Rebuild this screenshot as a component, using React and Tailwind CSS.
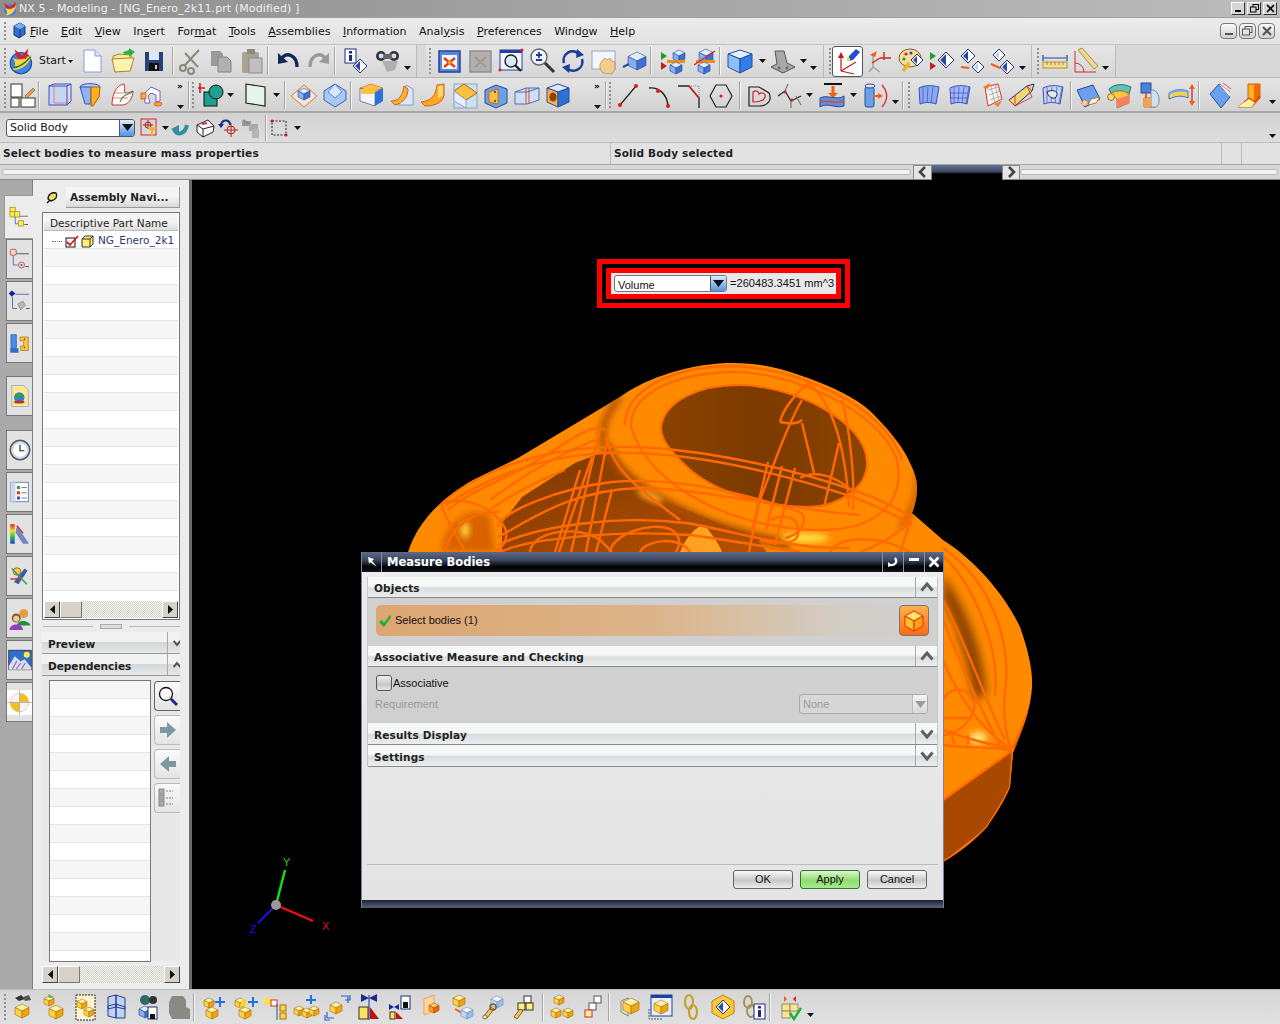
import React from 'react';

const Ic = ({ children, s = 28, vb = 28 }) => (
  <svg width={s} height={s} viewBox={`0 0 ${vb} ${vb}`} className="block shrink-0">{children}</svg>
);
const PAL = {
  y: ['#fff0b0', '#ffd24a', '#f0a410', '#a87000'],
  b: ['#e0ecff', '#86aef0', '#3f70d4', '#2a4a9a'],
  l: ['#f0f6ff', '#c4d8f4', '#9abce8', '#6a8cc0'],
  o: ['#ffd070', '#ffa020', '#f06a00', '#b04000'],
  g: ['#c8c8c8', '#a0a0a0', '#808080', '#606060'],
};
const C = ({ x = 14, y = 14, s = 8, c = 'y' }) => {
  const p = PAL[c];
  return (
    <g stroke={p[3]} strokeWidth="0.6" strokeLinejoin="round">
      <polygon fill={p[0]} points={`${x},${y - s} ${x + s},${y - s / 2} ${x},${y} ${x - s},${y - s / 2}`} />
      <polygon fill={p[1]} points={`${x - s},${y - s / 2} ${x},${y} ${x},${y + s} ${x - s},${y + s / 2}`} />
      <polygon fill={p[2]} points={`${x},${y} ${x + s},${y - s / 2} ${x + s},${y + s / 2} ${x},${y + s}`} />
    </g>
  );
};
const Dia = ({ x, y, s = 6, c = '#2a4aa8' }) => (
  <g>
    <polygon points={`${x},${y - s} ${x + s},${y} ${x},${y + s} ${x - s},${y}`} fill="#fff" stroke="#20307a" />
    <polygon points={`${x},${y - s + 2} ${x},${y + s - 2} ${x - s + 2},${y}`} fill={c} />
  </g>
);
const Tri2 = () => (
  <g>
    <polygon points="2,5 8,9 2,13" fill="#20a020" />
    <polygon points="2,15 8,19 2,23" fill="#c02020" />
  </g>
);
const Patch = ({ fill = '#8aa8f0', grid = 3 }) => (
  <g>
    <path d="M5,7 C11,4 18,4 25,6 L22,23 C16,21 11,21 6,23 Z" fill={fill} stroke="#3a50c0" />
    {Array.from({ length: grid }).map((_, i) => (
      <path key={i} d={`M${9 + i * 5},6 L${9 + i * 4},22`} stroke="#3a50c0" strokeWidth="0.7" fill="none" />
    ))}
  </g>
);

const I = {
  start: (
    <Ic s={30}>
      <circle cx="13" cy="16" r="10" fill="#3d86e0" stroke="#1c4c9c" />
      <path d="M5,11 C10,14 17,13 24,7 C21,17 14,23 5,22 C9,19 8,14 5,11Z" fill="#ffd24a" />
      <path d="M7,3 L14,9 L20,2 L18,12 L10,12Z" fill="#e02020" />
      <path d="M6,20 C11,20 17,16 22,10" stroke="#208020" strokeWidth="1.4" fill="none" />
    </Ic>
  ),
  newd: <Ic><path d="M6,3 H17 L23,9 V25 H6Z" fill="#fff" stroke="#8a9ae0" /><path d="M17,3 V9 H23" fill="#dde4ff" stroke="#8a9ae0" /></Ic>,
  open: <Ic><path d="M4,9 L10,7 L22,8 V22 L6,25Z" fill="#ffe88a" stroke="#a08a30" /><path d="M3,12 L20,11 L25,11 L21,24 L6,25Z" fill="#fff2b0" stroke="#a08a30" /><path d="M14,5 L20,3 V1 L26,5 L20,10 V7 L16,8Z" fill="#30b040" /></Ic>,
  save: <Ic><rect x="5" y="5" width="18" height="19" fill="#28407c" /><rect x="9" y="5" width="10" height="8" fill="#dfe8ff" /><rect x="9" y="16" width="10" height="8" fill="#111" /><rect x="15" y="18" width="2" height="4" fill="#ccc" /></Ic>,
  cut: <Ic><g stroke="#8a8a7a" strokeWidth="2" fill="none"><path d="M23,3 L9,18" /><path d="M9,6 L22,20" /><circle cx="7" cy="21" r="3" /><circle cx="15" cy="24" r="3" /></g></Ic>,
  copy: <Ic><path d="M4,4 H13 L16,7 V19 H4Z" fill="#9a9a9a" /><path d="M11,10 H20 L24,14 V25 H11Z" fill="#b0b0b0" stroke="#858585" /></Ic>,
  paste: <Ic><rect x="4" y="5" width="17" height="21" rx="2" fill="#a8a490" /><rect x="9" y="2" width="8" height="5" fill="#8a8a80" /><rect x="11" y="11" width="13" height="15" fill="#c0c0c0" stroke="#8a8a8a" /></Ic>,
  undo: <Ic><path d="M8,11 C13,5 23,8 23,20" stroke="#12285c" strokeWidth="3.4" fill="none" /><polygon points="4,6 4,17 14,15" fill="#12285c" /></Ic>,
  redo: <Ic><path d="M20,11 C15,5 5,8 5,20" stroke="#9a9a9a" strokeWidth="3.4" fill="none" /><polygon points="24,6 24,17 14,15" fill="#9a9a9a" /></Ic>,
  info: <Ic><rect x="3" y="2" width="11" height="14" fill="#fff" stroke="#1a2a80" /><rect x="7" y="4" width="3" height="2.5" fill="#1a2a80" /><rect x="7" y="8" width="3" height="6" fill="#1a2a80" /><Dia x={18} y={19} s={7} /></Ic>,
  binoc: <Ic><circle cx="8" cy="9" r="5" fill="#333" /><circle cx="21" cy="9" r="5" fill="#333" /><rect x="10" y="7" width="9" height="5" fill="#666" /><circle cx="8" cy="9" r="2.4" fill="#cfe0ff" /><circle cx="21" cy="9" r="2.4" fill="#cfe0ff" /><polygon points="9,14 25,14 22,23 14,25" fill="#b0b0b0" /></Ic>,
  fit: <Ic><rect x="4" y="4" width="21" height="21" fill="#5a86d8" stroke="#2040a0" strokeWidth="1.5" /><rect x="7" y="8" width="15" height="14" fill="#f4f6ff" /><path d="M9,11 L20,20 M20,11 L9,20" stroke="#e04010" strokeWidth="2.4" /><circle cx="14.5" cy="15.5" r="1.8" fill="#f0a010" /></Ic>,
  fitg: <Ic><rect x="4" y="4" width="21" height="21" fill="#b0b0b0" stroke="#909090" strokeWidth="1.5" /><path d="M9,10 L20,20 M20,10 L9,20" stroke="#a89880" strokeWidth="2.2" /></Ic>,
  zwin: <Ic><rect x="3" y="3" width="22" height="20" fill="#f4f6ff" stroke="#2040a0" /><rect x="3" y="3" width="22" height="3" fill="#2040a0" /><circle cx="14" cy="14" r="6" fill="#dbe8f5" stroke="#222" strokeWidth="1.4" /><path d="M18,18 L24,24" stroke="#222" strokeWidth="2.4" /><circle cx="3" cy="23" r="1.6" fill="#e02020" /><circle cx="25" cy="3" r="1.6" fill="#e02020" /></Ic>,
  zin: <Ic><circle cx="11" cy="10" r="8" fill="#f0f4ff" stroke="#666" strokeWidth="1.4" /><path d="M11,5 V11 M8,8 H14 M8,13 H14" stroke="#1c3c9c" strokeWidth="1.8" /><path d="M17,16 L26,25" stroke="#333" strokeWidth="3" /></Ic>,
  rot: <Ic><path d="M5,16 A9,9 0 0 1 20,7" stroke="#1d3e9c" strokeWidth="2.6" fill="none" /><path d="M23,12 A9,9 0 0 1 8,21" stroke="#1d3e9c" strokeWidth="2.6" fill="none" /><polygon points="18,2 25,8 17,11" fill="#1d3e9c" /><polygon points="10,26 3,20 11,17" fill="#1d3e9c" /></Ic>,
  pan: <Ic><rect x="2" y="4" width="23" height="18" fill="#f4f6ff" stroke="#9aa0c0" /><path d="M13,26 C9,22 9,17 12,14 L15,11 L17,13 L20,11 L22,14 L25,15 V22 L22,27Z" fill="#f4cc90" stroke="#a88850" strokeWidth="0.7" /></Ic>,
  persp: <Ic><C x={16} y={14} s={9} c="b" /><path d="M2,20 L8,17" stroke="#2a4a9a" strokeWidth="2" /></Ic>,
  clipa: <Ic><Tri2 /><C x={20} y={9} s={6} c="b" /><rect x="8" y="13" width="18" height="3" fill="#f09010" /><C x={17} y={21} s={6} c="b" /></Ic>,
  clipb: <Ic><C x={16} y={9} s={7} c="b" /><rect x="6" y="13" width="19" height="3" fill="#f09010" /><C x={14} y={21} s={6} c="b" /><path d="M4,18 L25,4" stroke="#e02020" strokeWidth="1.4" /></Ic>,
  bcube: <Ic><polygon points="14,3 26,7 14,12 2,7" fill="#e4f0ff" stroke="#2a4a9a" /><polygon points="2,7 14,12 14,26 2,20" fill="#8cc0f8" stroke="#2a4a9a" /><polygon points="14,12 26,7 26,20 14,26" fill="#2c80e8" stroke="#2a4a9a" /></Ic>,
  brack: <Ic><path d="M6,4 H15 L18,16 L26,20 L14,26 L2,20 L8,17Z" fill="#a8a8a8" stroke="#555" /><circle cx="10" cy="21" r="1.4" fill="#666" /><circle cx="18" cy="21" r="1.4" fill="#666" /></Ic>,
  wcs: <Ic><path d="M7,8 V24 M7,24 L22,15 M7,24 L20,27" stroke="#c01818" strokeWidth="1.2" fill="none" /><polygon points="7,5 4,11 10,11" fill="#c01818" /><polygon points="15,9 22,2 26,5 19,13 14,14" fill="#2050d0" /><rect x="13" y="11" width="3" height="3" fill="#f0d040" /></Ic>,
  wcs2: <Ic><path d="M7,6 V20 L3,25 M7,20 L14,25" stroke="#a0a0a0" strokeWidth="1.4" fill="none" /><path d="M14,11 H25 M18,5 V13 M14,11 L6,16" stroke="#c82818" strokeWidth="1.4" fill="none" /><polygon points="4,8 11,4 9,10" fill="#f06010" /></Ic>,
  paint: <Ic><ellipse cx="13" cy="11" rx="11" ry="9" fill="#f8dca0" stroke="#806020" /><circle cx="9" cy="7" r="1.6" fill="#e02020" /><circle cx="14" cy="6" r="1.6" fill="#2050d0" /><circle cx="7" cy="12" r="1.6" fill="#20a020" /><Dia x={20} y={13} s={6} /><path d="M12,16 L6,24" stroke="#f0b020" strokeWidth="3.4" /></Ic>,
  tridia: <Ic><Tri2 /><Dia x={18} y={13} s={8} /></Ic>,
  dia2: <Ic><Dia x={10} y={9} s={7} /><Dia x={20} y={20} s={6} c="#c0d0f0" /><path d="M3,20 L11,21" stroke="#f06010" strokeWidth="2" /></Ic>,
  dia3: <Ic><Dia x={11} y={8} s={6} c="#c0d0f0" /><Dia x={19} y={20} s={7} /><path d="M3,17 L12,21" stroke="#f06010" strokeWidth="2" /></Ic>,
  ruler: <Ic><path d="M2,8 V14 M26,8 V14 M3,11 H25" stroke="#2040a0" strokeWidth="1.2" /><rect x="2" y="15" width="24" height="6" fill="#f8e090" stroke="#a89040" /><path d="M6,15 V18 M10,15 V18 M14,15 V18 M18,15 V18 M22,15 V18" stroke="#a08030" /></Ic>,
  angle: <Ic><path d="M4,4 V25 H25 M4,16 A9,9 0 0 1 13,25" stroke="#d03030" fill="none" /><polygon points="7,3 11,1 27,19 23,22" fill="#f0d890" stroke="#a89040" /></Ic>,

  layout: <Ic><rect x="2" y="3" width="11" height="13" fill="#fff" stroke="#333" /><rect x="2" y="17" width="8" height="9" fill="#fff" stroke="#333" /><rect x="12" y="17" width="14" height="9" fill="#fff" stroke="#333" /><path d="M16,15 L24,7 L26,9 L18,17Z" fill="#f0a030" stroke="#555" strokeWidth="0.6" /></Ic>,
  wire: <Ic><rect x="3" y="5" width="18" height="19" fill="#c8d4f4" stroke="#3a50c0" /><path d="M3,5 L8,3 H25 V20 L21,24 M21,5 L25,3" stroke="#3a50c0" fill="none" /><path d="M8,3 V22 H25" stroke="#e06060" strokeWidth="0.7" fill="none" /></Ic>,
  sect: <Ic><ellipse cx="13" cy="6" rx="10" ry="3.4" fill="#b0ccf4" stroke="#3a50c0" /><path d="M3,6 H14 V23 H8Z" fill="#90b4f0" stroke="#3a50c0" /><path d="M14,6 H23 L22,16 L16,25 H14Z" fill="#ffb020" stroke="#a86000" /></Ic>,
  wave: <Ic><path d="M4,24 C4,14 8,4 16,3 C18,10 14,12 20,12 L25,10 C25,16 21,24 14,24Z" fill="#fff" stroke="#d03030" /><path d="M12,21 C14,14 19,14 25,11" stroke="#30a060" strokeWidth="1.2" fill="none" /><path d="M6,12 H18 M5,17 H20" stroke="#d03030" strokeWidth="0.6" /></Ic>,
  pipe: <Ic><path d="M5,13 L12,6 L21,10 V20 L17,21 V14 L12,12 L9,15 L11,22 L6,22Z" fill="#fff" stroke="#6a60d0" /><rect x="2" y="12" width="5" height="6" fill="#ffb020" stroke="#d03030" strokeWidth="0.7" /><ellipse cx="19" cy="23" rx="4" ry="2" fill="#ffb020" stroke="#d03030" strokeWidth="0.7" /></Ic>,
  sketch: <Ic><path d="M3,2 V12 M1,7 H8" stroke="#d02020" strokeWidth="1.6" /><rect x="7" y="11" width="13" height="14" fill="#20a090" stroke="#111" /><circle cx="19" cy="11" r="7" fill="#20a090" stroke="#111" /></Ic>,
  plane: <Ic><polygon points="5,3 24,6 24,25 5,22" fill="#e6f4ea" stroke="#222" strokeWidth="1.2" /></Ic>,
  wpl: <Ic><polygon points="14,4 27,15 14,26 1,15" fill="#f4e8d8" stroke="#e07030" /><C x={14} y={13} s={6} c="b" /></Ic>,
  gem: <Ic><polygon points="14,3 25,10 25,19 14,26 3,19 3,10" fill="#a8c8f8" stroke="#3a60c0" /><polygon points="14,3 21,11 14,17 7,11" fill="#d8e8ff" stroke="#3a60c0" strokeWidth="0.7" /></Ic>,
  ext: <Ic><polygon points="14,3 26,7 14,11 3,7" fill="#ffc040" stroke="#d06020" strokeWidth="0.6" /><polygon points="3,7 14,11 18,11 18,25 3,20" fill="#f4f6ff" stroke="#345" strokeWidth="0.6" /><polygon points="18,11 26,7 26,20 18,25" fill="#2c70d8" /><rect x="4" y="8" width="14" height="5" fill="#ffc040" /></Ic>,
  curv1: <Ic><path d="M4,21 C13,20 17,14 18,4 L25,8 V24 H10Z" fill="#dce8fa" stroke="#8aa0c8" /><path d="M3,20 C11,20 15,14 16,5 L20,8 C20,16 15,22 7,24Z" fill="#ffb030" stroke="#d06020" /></Ic>,
  curv2: <Ic><path d="M2,21 C13,20 17,14 18,4 L25,3 V14 C24,21 17,25 6,25Z" fill="#ffa820" stroke="#d06020" /><path d="M19,5 L24,4 V14 L19,18Z" fill="#ffd870" /></Ic>,
  chamf: <Ic><rect x="4" y="3" width="23" height="24" fill="#cce0f4" stroke="#8aa8c8" /><polygon points="4,10 14,3 27,12 16,19" fill="#ffc040" stroke="#b06010" /><polygon points="4,10 16,19 16,27 4,20" fill="#e8f0ff" stroke="#8aa8c8" /></Ic>,
  shell: <Ic><polygon points="3,9 14,4 25,8 25,22 14,27 3,22" fill="#6aa0e8" stroke="#2a4a9a" /><path d="M7,11 L16,8 V23 L7,21Z" fill="#ffc040" stroke="#c07010" /><circle cx="13" cy="11" r="1" fill="#333" /><circle cx="13" cy="20" r="1" fill="#333" /></Ic>,
  split: <Ic><polygon points="2,11 13,7 26,7 26,19 14,23 2,23" fill="#cfe0f6" stroke="#4a70b0" /><path d="M13,7 V23 M16,7 V22" stroke="#e03030" strokeWidth="0.9" /><path d="M2,11 H14 L26,7" stroke="#4a70b0" fill="none" /></Ic>,
  hole: <Ic><polygon points="14,3 25,7 14,11 3,7" fill="#dbe8ff" stroke="#2a4a9a" /><polygon points="3,7 14,11 14,26 3,21" fill="#ffb040" stroke="#2a4a9a" /><polygon points="14,11 25,7 25,21 14,26" fill="#2c70d8" stroke="#2a4a9a" /><ellipse cx="9" cy="16" rx="3.6" ry="4.6" fill="#904000" /></Ic>,
  line: <Ic><path d="M6,24 L22,5" stroke="#222" strokeWidth="1.2" /><circle cx="6" cy="24" r="2" fill="#e01818" /><circle cx="22" cy="5" r="2" fill="#e01818" /></Ic>,
  arc: <Ic><path d="M4,7 C14,6 22,13 23,25" stroke="#222" strokeWidth="1.4" fill="none" /><circle cx="13" cy="10" r="2" fill="#e01818" /><circle cx="23" cy="25" r="2" fill="#e01818" /></Ic>,
  fillet: <Ic><path d="M2,5 H13 L23,17 V27" stroke="#222" strokeWidth="1.3" fill="none" /><path d="M13,5 H23 V17" stroke="#888" strokeDasharray="1 1" fill="none" /><path d="M13,5 L23,17" stroke="#e01818" strokeWidth="1.3" /></Ic>,
  hex: <Ic><polygon points="9,4 19,4 25,15 19,26 9,26 3,15" fill="none" stroke="#222" strokeWidth="1.2" /><circle cx="14" cy="15" r="1.6" fill="#e01818" /></Ic>,
  heart: <Ic><path d="M4,6 H14 L24,12 C27,18 24,25 14,25 H4Z" fill="none" stroke="#222" strokeWidth="1.2" /><path d="M8,11 C12,8 14,12 14,13 C16,11 21,12 20,16 C19,20 12,21 8,21Z" fill="none" stroke="#d02020" strokeWidth="1.2" /></Ic>,
  spline: <Ic><path d="M2,15 L9,10 L15,20 L25,15" stroke="#222" strokeWidth="1.2" fill="none" /><path d="M12,3 L9,10 M15,20 V27 M20,15 L25,24" stroke="#777" strokeWidth="1.2" /><circle cx="9" cy="11" r="1.6" fill="#e02020" /><circle cx="16" cy="19" r="1.6" fill="#e02020" /></Ic>,
  proj: <Ic><path d="M6,3 H24" stroke="#111" strokeWidth="2" /><path d="M15,5 V13" stroke="#f06010" strokeWidth="3" /><polygon points="10,12 20,12 15,17" fill="#f06010" /><path d="M2,17 C9,13 19,20 26,15 V25 C18,28 9,21 2,26Z" fill="#5a90e0" stroke="#2a4a9a" /><path d="M3,21 C10,18 18,24 25,20" stroke="#f04030" strokeWidth="1.6" fill="none" /></Ic>,
  offs: <Ic><rect x="5" y="6" width="9" height="20" rx="2" fill="#6aa0e8" stroke="#2a4a9a" /><ellipse cx="10" cy="5" rx="5" ry="2" fill="#d8e8ff" stroke="#2a4a9a" /><path d="M13,15 H19" stroke="#f06010" strokeWidth="2" /><polygon points="18,12 23,15 18,18" fill="#f06010" /><path d="M22,4 C28,11 28,19 22,26" stroke="#e02020" strokeWidth="1.2" fill="none" /></Ic>,
  s1: <Ic><Patch fill="#8aa8f4" /></Ic>,
  s2: <Ic><Patch fill="#a0b8f6" grid={4} /><path d="M5,12 H24 M5,17 H23" stroke="#3a50c0" strokeWidth="0.7" /></Ic>,
  s3: <Ic><path d="M9,6 L22,3 L26,18 L12,25Z" fill="#f4f4f4" stroke="#e03010" /><path d="M12,9 L22,6 M13,14 L24,10 M14,19 L25,15 M15,6 L19,22 M19,4 L23,20" stroke="#9a9a9a" strokeWidth="0.7" /><polygon points="7,6 14,2 12,8" fill="#f08020" /><polygon points="22,26 26,20 18,23" fill="#f08020" /></Ic>,
  s4: <Ic><polygon points="2,19 20,5 27,3 25,10 8,25" fill="#f0d870" stroke="#1a2a90" /><path d="M2,19 L8,25 L8,14 M20,5 L25,10 M20,5 L25,16 L8,25" stroke="#e03030" strokeWidth="0.9" fill="none" /></Ic>,
  s5: <Ic><Patch fill="#c4d4f4" grid={4} /><path d="M9,11 C14,8 20,10 19,14 C18,19 11,18 9,11Z" fill="#e0e8f8" stroke="#222" /></Ic>,
  t1: <Ic><path d="M3,9 L19,4 L26,18 L11,26Z" fill="#6aa0f0" stroke="#2a4a9a" /><path d="M17,18 L26,16 L22,22 L14,24Z" fill="#fff8e0" stroke="#a08030" /><circle cx="11" cy="22" r="3" fill="#ffd0a0" stroke="#e02020" strokeDasharray="1 1" /></Ic>,
  t2: <Ic><path d="M4,8 C10,2 20,3 26,6 L24,13 C18,9 12,9 6,12Z" fill="#60c0c0" stroke="#307070" /><path d="M6,12 C12,9 18,9 24,13 V22 L12,27 V18Z" fill="#ffc840" stroke="#c07010" /><path d="M12,18 L24,14 V22 L12,27Z" fill="#f88060" /><circle cx="6" cy="16" r="3.4" fill="#ffd870" stroke="#907030" /></Ic>,
  t3: <Ic><rect x="5" y="2" width="10" height="10" fill="#4a80e0" stroke="#2a4a9a" /><path d="M10,12 V18" stroke="#f06010" strokeWidth="2" /><path d="M8,17 H20 V26 H8Z" fill="#ffc040" stroke="#c07010" /><path d="M17,9 C24,10 25,24 20,26 H15 V9Z" fill="#cfe0f0" stroke="#8090a0" /><rect x="8" y="17" width="7" height="9" fill="#f8a050" /></Ic>,
  t4: <Ic><path d="M2,12 C8,8 15,8 21,10 V17 C15,14 8,15 2,18Z" fill="#ffd050" stroke="#3a70d0" /><path d="M2,12 C8,8 15,8 21,10 V12 C15,10 8,10 2,14Z" fill="#70b0f0" /><path d="M25,5 V23" stroke="#d03030" strokeWidth="1.4" /><polygon points="25,3 22,8 28,8" fill="#f06010" /><polygon points="25,25 22,20 28,20" fill="#f06010" /></Ic>,
  u1: <Ic><path d="M5,13 L14,3 L25,16 L16,27Z" fill="#6aa0f0" stroke="#2a4a9a" /><path d="M14,3 L25,16 L22,6Z" fill="#fff" /><path d="M15,3 L25,11 M18,2 L26,8" stroke="#e03030" strokeWidth="0.8" /></Ic>,
  u2: <Ic><path d="M2,26 L12,18 V3 H24 V17 L16,26Z" fill="#ffb020" stroke="#c06010" /><path d="M18,3 H24 V17 L18,21Z" fill="#f06a00" /><path d="M2,26 L12,18 L18,21 L16,26Z" fill="#fff2a0" /><path d="M8,21 L13,17 L19,21 L24,15" stroke="#e02020" fill="none" /></Ic>,

  filter: <Ic s={22} vb={22}><rect x="1" y="2" width="15" height="16" fill="none" stroke="#d02828" /><path d="M8,3 V12 M3,8 H13" stroke="#a02020" /><circle cx="8" cy="8" r="3" fill="none" stroke="#a02020" /><polygon points="7,10 17,10 13,14 13,19 11,19 11,14" fill="#f0b030" /></Ic>,
  back: <Ic s={22} vb={22}><path d="M4,12 C6,19 15,18 17,8" stroke="#3090a0" strokeWidth="4" fill="none" /><polygon points="1,12 9,8 9,17" fill="#3090a0" /></Ic>,
  cubeo: <Ic s={22} vb={22}><polygon points="3,8 14,3 20,9 19,15 9,20 3,15" fill="#fff" stroke="#222" /><path d="M3,8 L9,12 L20,9 M9,12 V20" stroke="#222" fill="none" /><path d="M8,7 L13,6" stroke="#d03030" strokeWidth="2" /></Ic>,
  sel: <Ic s={22} vb={22}><path d="M3,8 C4,2 12,2 12,8" stroke="#1a2a80" strokeWidth="2" fill="none" /><polygon points="0,7 6,7 3,11" fill="#1a2a80" /><circle cx="13" cy="13" r="4" fill="none" stroke="#c02020" /><path d="M13,6 V20 M6,13 H20" stroke="#c02020" /></Ic>,
  selg: <Ic s={22} vb={22}><rect x="2" y="4" width="9" height="5" fill="#9a9a9a" /><rect x="9" y="7" width="9" height="7" fill="#aaa" /><rect x="12" y="12" width="7" height="9" fill="#b4b4b4" /><path d="M3,3 L9,7" stroke="#888" strokeWidth="2" /></Ic>,
  rect: <Ic s={22} vb={22}><rect x="3" y="4" width="14" height="14" fill="none" stroke="#222" strokeDasharray="2 1.5" /><circle cx="3" cy="4" r="1.6" fill="#e01818" /><circle cx="17" cy="18" r="1.6" fill="#e01818" /></Ic>,

  b1: <Ic><path d="M6,5 L12,2 L16,6 L10,8Z" fill="#333" /><path d="M14,4 L20,2 L22,7 L16,8Z" fill="#555" /><C x={13} y={18} s={7} /></Ic>,
  b2: <Ic><C x={9} y={8} s={5} /><path d="M8,1 L14,4 L9,5Z" fill="#60b040" /><C x={16} y={19} s={7} /></Ic>,
  b3: <Ic><rect x="5" y="2" width="19" height="25" fill="#fff4d0" stroke="#222" strokeDasharray="2 1" /><C x={11} y={11} s={5} /><C x={18} y={19} s={5} /></Ic>,
  b4: <Ic><path d="M6,4 L14,2 L14,14 L6,16Z M14,2 L23,5 V16 L14,14Z M6,13 L14,11 V25 L6,23Z M14,11 L23,14 V25 L14,25Z" fill="#bdd4f4" stroke="#2a3a90" /></Ic>,
  b5: <Ic><circle cx="12" cy="7" r="5" fill="#2a6a6a" /><circle cx="20" cy="7" r="4" fill="#333" /><C x={12} y={19} s={6} c="b" /><rect x="15" y="14" width="9" height="12" fill="#fff" stroke="#1a2a70" /><rect x="17" y="21" width="5" height="5" fill="#111" /></Ic>,
  b6: <Ic><path d="M8,3 H19 L22,7 V14 L26,16 V26 H8 L5,20 V9Z" fill="#8a8a84" /></Ic>,
  b7: <Ic><C x={9} y={10} s={5} /><C x={12} y={20} s={6} /><path d="M20,4 V14 M15,9 H25" stroke="#2070e8" strokeWidth="2" /></Ic>,
  b8: <Ic><C x={9} y={10} s={5} /><C x={14} y={20} s={6} /><polygon points="12,3 14,8 19,8 15,11 17,16 12,13 8,16" fill="#f8e050" opacity=".8" /><path d="M22,4 V14 M17,9 H27" stroke="#2070e8" strokeWidth="2" /></Ic>,
  b9: <Ic><polygon points="6,2 8,6 12,6 9,9 10,13 6,11 2,13 3,9 0,6 4,6" fill="#f8e050" /><rect x="9" y="7" width="6" height="6" fill="#fff" stroke="#e02020" /><path d="M15,11 V27" stroke="#2a50a0" /><rect x="18" y="12" width="6" height="6" fill="#ffd24a" stroke="#a87000" /><rect x="18" y="20" width="6" height="6" fill="#ffd24a" stroke="#a87000" /></Ic>,
  b10: <Ic><C x={6} y={18} s={5} /><C x={14} y={20} s={5} /><C x={21} y={18} s={5} /><path d="M18,2 V11 M13,7 H23" stroke="#2070e8" strokeWidth="2" /></Ic>,
  b11: <Ic><C x={12} y={15} s={6} /><path d="M17,3 H24 V10 M21,7 H26 V2" stroke="#3060d0" strokeWidth="1.2" fill="none" /><path d="M3,25 V19 M3,25 H10 M1,22 V27 H6" stroke="#3060d0" strokeWidth="1.2" fill="none" /></Ic>,
  b12: <Ic><polygon points="6,1 14,5 6,9" fill="#1a2a90" /><polygon points="22,1 14,5 22,9" fill="#1a2a90" /><path d="M14,2 V27" stroke="#1a2a90" /><rect x="4" y="14" width="9" height="12" fill="#ffe060" stroke="#333" /><polygon points="15,14 24,26 15,26" fill="#c01010" /></Ic>,
  b13: <Ic><rect x="15" y="3" width="9" height="13" fill="#fff" stroke="#1a2a70" /><rect x="17" y="9" width="5" height="6" fill="#111" /><polygon points="3,11 8,14 3,17" fill="#1a2a90" /><polygon points="13,11 8,14 13,17" fill="#1a2a90" /><rect x="4" y="19" width="5" height="7" fill="#ffe060" stroke="#333" /><polygon points="10,19 17,26 10,26" fill="#c01010" /></Ic>,
  b14: <Ic><path d="M7,6 L17,2 V18 L7,22Z" fill="#ffd8a0" stroke="#f0a050" /><C x={17} y={15} s={5} c="o" /></Ic>,
  b15: <Ic><C x={11} y={8} s={6} /><path d="M7,16 L14,20" stroke="#f06010" strokeWidth="2" /><C x={19} y={20} s={6} c="l" /></Ic>,
  b16: <Ic><C x={18} y={9} s={6} c="l" /><path d="M5,23 L12,14 L15,16 L8,25Z" fill="#f0c860" stroke="#806020" /><circle cx="14" cy="14" r="3" fill="none" stroke="#806020" strokeWidth="1.4" /><circle cx="6" cy="24" r="2" fill="#fff" stroke="#806020" /></Ic>,
  b17: <Ic><rect x="14" y="3" width="7" height="7" fill="#fff" stroke="#333" /><rect x="8" y="10" width="7" height="7" fill="#fff080" stroke="#333" /><rect x="16" y="10" width="7" height="7" fill="#fff080" stroke="#333" /><path d="M4,24 L10,16 L13,18 L7,26Z" fill="#f0c860" stroke="#806020" /></Ic>,
  b18: <Ic><C x={10} y={7} s={5} /><C x={7} y={20} s={5} /><C x={19} y={20} s={5} /></Ic>,
  b19: <Ic><rect x="15" y="3" width="7" height="7" fill="#fff" stroke="#555" /><rect x="10" y="10" width="7" height="7" fill="#fff" stroke="#555" /><rect x="6" y="17" width="7" height="7" fill="#fff0a0" stroke="#e02020" /></Ic>,
  b20: <Ic><path d="M5,8 L12,5 V23 L5,19Z" fill="#ddd" stroke="#888" /><C x={15} y={13} s={8} /></Ic>,
  b21: <Ic><rect x="4" y="2" width="21" height="21" fill="#e8f0ff" stroke="#2040a0" /><rect x="4" y="2" width="21" height="3" fill="#2040a0" /><path d="M2,16 V26 H16" stroke="#555" fill="none" strokeDasharray="2 1" /><C x={14} y={14} s={7} /></Ic>,
  b22: <Ic><ellipse cx="11" cy="9" rx="4" ry="7" fill="none" stroke="#c8a030" strokeWidth="2.2" /><ellipse cx="15" cy="19" rx="4" ry="7" fill="none" stroke="#c8a030" strokeWidth="2.2" /></Ic>,
  b23: <Ic><polygon points="14,2 25,8 25,20 14,26 3,20 3,8" fill="#ffc838" stroke="#c08010" /><Dia x={14} y={14} s={7} /></Ic>,
  b24: <Ic><ellipse cx="8" cy="9" rx="4" ry="6" fill="none" stroke="#a09050" strokeWidth="1.8" /><ellipse cx="11" cy="18" rx="4" ry="6" fill="none" stroke="#a09050" strokeWidth="1.8" /><rect x="14" y="11" width="11" height="15" fill="#fff" stroke="#1a2a80" /><rect x="18" y="13" width="3" height="2.5" fill="#1a2a80" /><rect x="18" y="17" width="3" height="7" fill="#1a2a80" /></Ic>,
  b25: <Ic><rect x="6" y="11" width="8" height="7" fill="#ffe880" stroke="#888" /><rect x="14" y="11" width="8" height="7" fill="#ffe880" stroke="#888" /><rect x="6" y="18" width="8" height="7" fill="#ffe880" stroke="#888" /><polygon points="8,3 11,6 8,9" fill="#f06010" /><polygon points="20,3 17,6 20,9" fill="#e02020" /><path d="M14,20 L18,26 L25,15" stroke="#20b030" strokeWidth="2.4" fill="none" /></Ic>,

  tTree: <Ic s={24} vb={32}><rect x="4" y="3" width="7" height="7" fill="#ffe850" stroke="#a09020" /><rect x="10" y="9" width="7" height="7" fill="#ffe850" stroke="#a09020" /><rect x="4" y="9" width="6" height="7" fill="#ffe850" stroke="#a09020" /><path d="M17,15 H28 M11,16 V25 H15" stroke="#3a50a0" fill="none" /><rect x="15" y="21" width="7" height="7" fill="#ffe850" stroke="#a09020" /><path d="M23,26 H28" stroke="#333" /></Ic>,
  tCon: <Ic s={24} vb={32}><rect x="3" y="3" width="8" height="8" rx="2" fill="#f4d0d0" stroke="#a04040" /><path d="M11,9 H28" stroke="#333" /><path d="M7,12 V24 H13" stroke="#3a50a0" fill="none" /><circle cx="18" cy="24" r="4" fill="none" stroke="#a04040" /><circle cx="18" cy="24" r="1.4" fill="#a04040" /><path d="M23,26 H28" stroke="#333" /></Ic>,
  tPart: <Ic s={24} vb={32}><polygon points="5,2 10,6 5,10 1,6" fill="#1a2090" /><path d="M10,7 H28 M6,10 V26 H12" stroke="#3a50a0" fill="none" /><path d="M13,20 L20,16 L23,22 L17,28Z" fill="#b8b8b8" stroke="#888" /><path d="M24,26 H29" stroke="#333" /></Ic>,
  tReuse: <Ic s={24} vb={32}><rect x="4" y="5" width="7" height="18" fill="#4a90e8" stroke="#2a50a0" /><path d="M3,23 H14 V29 H3Z" fill="#2a70c8" /><path d="M16,8 H27 V26 H17 V20 H21 V13 H16Z" fill="#ffc840" stroke="#a07010" /><circle cx="22" cy="11" r="1" fill="#333" /><circle cx="22" cy="22" r="1" fill="#333" /></Ic>,
  tWeb: <Ic s={24} vb={32}><path d="M5,2 H21 L27,8 V30 H5Z" fill="#ffe890" stroke="#90a0d0" /><circle cx="15" cy="18" r="7" fill="#3080e0" /><path d="M10,14 L18,13 L17,19 L12,20Z" fill="#30a040" /><ellipse cx="15" cy="24" rx="7" ry="2" fill="#c03030" /></Ic>,
  tClock: <Ic s={24} vb={32}><circle cx="16" cy="16" r="13" fill="#c8dcf4" stroke="#555" strokeWidth="2" /><circle cx="16" cy="16" r="9" fill="#fff" /><path d="M16,9 V17 H22" stroke="#222" strokeWidth="1.5" fill="none" /></Ic>,
  tList: <Ic s={24} vb={32}><rect x="4" y="3" width="23" height="26" fill="#fff" stroke="#50609a" /><rect x="4" y="3" width="6" height="26" fill="#d0d8f0" /><rect x="12" y="8" width="4" height="4" fill="#30a040" /><rect x="12" y="15" width="4" height="4" fill="#e03030" /><rect x="12" y="22" width="4" height="4" fill="#3050c0" /><path d="M18,10 H25 M18,17 H25 M18,24 H25" stroke="#555" /></Ic>,
  tRole: <Ic s={24} vb={32}><rect x="3" y="3" width="6" height="26" fill="url(#rb)" /><path d="M12,5 L28,29 H20 L10,14Z" fill="#7088c0" /><path d="M12,5 L20,15" stroke="#e03030" strokeWidth="2" /></Ic>,
  tMotion: <Ic s={24} vb={32}><path d="M8,24 L22,6 L26,9 L14,27Z" fill="#3060b0" /><circle cx="12" cy="10" r="5" fill="#ffc840" stroke="#805010" /><path d="M5,6 L25,27" stroke="#30a060" strokeWidth="2" /><path d="M3,20 H17" stroke="#e03030" strokeWidth="2" /></Ic>,
  tUsers: <Ic s={24} vb={32}><circle cx="21" cy="10" r="6" fill="#e0a040" /><path d="M12,26 C12,18 28,18 30,26Z" fill="#209040" /><circle cx="11" cy="16" r="6" fill="#806030" /><circle cx="11" cy="17" r="4" fill="#f4c8a0" /><path d="M2,32 C2,22 20,22 20,32Z" fill="#9040c0" /></Ic>,
  tPic: <Ic s={24} vb={32}><rect x="1" y="3" width="30" height="26" fill="#3070c8" /><rect x="1" y="3" width="30" height="26" fill="none" stroke="#223" /><circle cx="25" cy="9" r="4" fill="#ffe840" /><path d="M1,24 L9,11 L17,18 L22,15 L31,26 V29 H1Z" fill="#dde" /><path d="M6,28 L12,17 M11,28 L17,20 M18,28 L23,20" stroke="#8070b0" strokeWidth="1.6" /></Ic>,
  tBall: <Ic s={25} vb={32}><rect x="0" y="0" width="32" height="32" fill="#fff" /><circle cx="16" cy="16" r="12" fill="#f4f4f4" stroke="#ccc" /><path d="M16,4 A12,12 0 0 1 28,16 H16Z" fill="#f0c020" /><path d="M4,16 A12,12 0 0 0 16,28 V16Z" fill="#f0c020" /><path d="M16,0 V32 M0,16 H32" stroke="#aaa" /></Ic>,
};

const Grip = () => <div className="w-[3px] h-[26px] border-l-2 border-dotted border-[#8f8f8f] shrink-0" />;
const Sep = ({ h = 'h-[28px]' }) => <div className={`w-[2px] ${h} border-l border-[#a6a6a6] bg-[#f4f4f4] shrink-0`} />;
const S = ({ i, w = 'w-[31px]' }) => <div className={`${w} flex items-center justify-center shrink-0`}>{I[i]}</div>;
const Arr = ({ w = 'w-[10px]', c = '' }) => (
  <div className={`${w} flex items-center justify-center shrink-0 ${c}`}>
    <svg width="7" height="4" viewBox="0 0 7 4"><polygon points="0,0 7,0 3.5,4" fill="#111" /></svg>
  </div>
);
const ArrLow = ({ w = 'w-[10px]' }) => <Arr w={w} c="self-end pb-[7px]" />;
const Over = () => (
  <div className="w-[14px] flex flex-col items-center justify-between h-[28px] shrink-0 font-['DejaVu_Sans'] text-[9px] font-bold leading-[10px] text-black">
    <span>»</span>
    <svg width="7" height="4" viewBox="0 0 7 4"><polygon points="0,0 7,0 3.5,4" fill="#111" /></svg>
  </div>
);
const Sp = ({ w }) => <div className={`${w} shrink-0`} />;

const WinBtn = ({ children }) => (
  <div className="h-[13px] flex items-center justify-center bg-[#d6d6d6] border border-[#333] border-t-white border-l-white shrink-0 w-[14px]">{children}</div>
);
const MdiBtn = ({ children, w = 'w-[17px]' }) => (
  <div className={`${w} h-[16px] rounded-[4px] border border-[#7a7a7a] bg-[linear-gradient(#fafafa,#cfcfcf)] flex items-center justify-center shrink-0`}>{children}</div>
);

const Menu = () => {
  const items = [['', 'F', 'ile'], ['', 'E', 'dit'], ['', 'V', 'iew'], ['In', 's', 'ert'], ['For', 'm', 'at'], ['', 'T', 'ools'], ['', 'A', 'ssemblies'], ['', 'I', 'nformation'], ['Anal', 'y', 'sis'], ['', 'P', 'references'], ['Wind', 'o', 'w'], ['', 'H', 'elp']];
  return (
    <div className="h-[27px] flex items-center bg-[linear-gradient(#ececec,#e2e2e2)] border-b border-[#c4c4c4] shrink-0">
      <Sp w="w-[4px]" />
      <div className="w-[3px] h-[18px] border-l-2 border-dotted border-[#8f8f8f]" />
      <div className="w-[23px] flex justify-center">
        <svg width="18" height="18" viewBox="0 0 18 18"><polygon points="4,4 10,1 15,4 15,12 9,16 4,13" fill="#2f6fd0" stroke="#123a80" /><polygon points="4,4 10,7 15,4 10,1" fill="#80b0f0" /><path d="M10,7 V15" stroke="#123a80" /></svg>
      </div>
      <div className="flex gap-[12.5px] text-[11px] text-[#111] font-['DejaVu_Sans'] leading-none">
        {items.map((m, i) => <span key={i}>{m[0]}<u>{m[1]}</u>{m[2]}</span>)}
      </div>
      <div className="flex-1" />
      <div className="flex gap-[2px] pr-[5px]">
        <MdiBtn><div className="w-[8px] h-[2px] bg-[#555] mt-[6px]" /></MdiBtn>
        <MdiBtn><svg width="11" height="10" viewBox="0 0 11 10"><rect x="3" y="0.5" width="7" height="6" fill="none" stroke="#555" /><rect x="0.5" y="3" width="7" height="6" fill="#e4e4e4" stroke="#555" /></svg></MdiBtn>
        <MdiBtn><svg width="10" height="10" viewBox="0 0 10 10"><path d="M1,1 L9,9 M9,1 L1,9" stroke="#555" strokeWidth="2.2" /></svg></MdiBtn>
      </div>
    </div>
  );
};

const Row1 = () => (
  <div className="h-[33px] flex bg-[#d8d8d8] shrink-0 border-b border-[#b8b8b8]">
    <div className="flex items-center h-full w-[417px] shrink-0 pl-[4px] bg-[linear-gradient(#e6e6e6,#d6d6d6)] border-r border-[#bbb]">
      <Grip />
      <S i="start" w="w-[30px]" />
      <div className="w-[39px] shrink-0 flex items-center pl-[2px] gap-[2px] text-[11px] font-['DejaVu_Sans'] text-[#111]">Start<svg width="5" height="3" viewBox="0 0 7 4"><polygon points="0,0 7,0 3.5,4" fill="#111" /></svg></div>
      <S i="newd" /><S i="open" /><S i="save" />
      <Sp w="w-[3px]" /><Sep /><S i="cut" /><S i="copy" /><S i="paste" />
      <Sep /><Sp w="w-[3px]" /><S i="undo" /><S i="redo" />
      <Sep /><Sp w="w-[4px]" /><S i="info" /><S i="binoc" />
      <ArrLow />
    </div>
    <Sp w="w-[9px]" />
    <div className="flex items-center h-full w-[398px] shrink-0 pl-[3px] bg-[linear-gradient(#e6e6e6,#d6d6d6)] border-r border-[#bbb]">
      <Grip />
      <Sp w="w-[1px]" />
      <S i="fit" /><S i="fitg" /><S i="zwin" /><S i="zin" /><S i="rot" /><S i="pan" /><S i="persp" />
      <Sep /><Sp w="w-[5px]" /><S i="clipa" /><S i="clipb" />
      <Sep /><Sp w="w-[2px]" /><S i="bcube" w="w-[34px]" /><Arr /><S i="brack" /><Arr /><ArrLow />
    </div>
    <div className="flex items-center h-full w-[208px] shrink-0 pl-[5px] bg-[linear-gradient(#e6e6e6,#d6d6d6)] border-r border-[#bbb]">
      <Grip />
      <div className="w-[31px] h-[31px] flex items-center justify-center bg-white border border-[#555] rounded-[3px] shrink-0">{I.wcs}</div>
      <Sp w="w-[1px]" />
      <S i="wcs2" /><S i="paint" /><S i="tridia" /><S i="dia2" w="w-[30px]" /><S i="dia3" w="w-[30px]" /><ArrLow />
    </div>
    <div className="flex items-center h-full w-[84px] shrink-0 pl-[5px] bg-[linear-gradient(#e6e6e6,#d6d6d6)] border-r border-[#bbb]">
      <Grip />
      <S i="ruler" w="w-[29px]" /><S i="angle" /><ArrLow />
    </div>
  </div>
);

const Row2 = () => (
  <div className="h-[35px] flex items-center pt-[1px] bg-[linear-gradient(#e4e4e4,#d2d2d2)] shrink-0 border-b-2 border-[#a8a8a8] pl-[4px]">
    <Grip /><S i="layout" /><Sep /><Sp w="w-[4px]" />
    <S i="wire" /><S i="sect" /><S i="wave" /><S i="pipe" />
    <Sp w="w-[5px]" /><Over /><Sp w="w-[1px]" /><Sep /><Sp w="w-[2px]" /><Grip />
    <Sp w="w-[2px]" /><S i="sketch" w="w-[28px]" /><Arr /><Sp w="w-[3px]" /><S i="plane" w="w-[33px]" /><Arr /><Sp w="w-[3px]" /><Sep />
    <Sp w="w-[2px]" /><S i="wpl" /><S i="gem" /><Sep /><Sp w="w-[3px]" /><S i="ext" /><S i="curv1" /><S i="curv2" /><S i="chamf" /><Sp w="w-[1px]" /><S i="shell" /><S i="split" /><S i="hole" />
    <Sp w="w-[17px]" /><Over /><Sp w="w-[1px]" /><Sep /><Sp w="w-[2px]" /><Grip />
    <Sp w="w-[1px]" /><S i="line" w="w-[30px]" /><S i="arc" /><S i="fillet" /><S i="hex" />
    <Sp w="w-[3px]" /><Sep /><S i="heart" w="w-[35px]" /><S i="spline" w="w-[28px]" /><Arr /><Sp w="w-[2px]" /><S i="proj" w="w-[32px]" /><Arr /><Sp w="w-[2px]" /><S i="offs" w="w-[28px]" /><ArrLow w="w-[14px]" />
    <Sep /><Sp w="w-[4px]" /><Grip /><Sp w="w-[1px]" />
    <S i="s1" /><S i="s2" /><S i="s3" /><S i="s4" /><S i="s5" />
    <Sp w="w-[3px]" /><Sep /><S i="t1" /><S i="t2" /><S i="t3" /><S i="t4" />
    <Sp w="w-[2px]" /><Sep /><Sp w="w-[3px]" /><S i="u1" /><S i="u2" /><ArrLow w="w-[14px]" />
  </div>
);

const Row3 = () => (
  <div className="h-[30px] flex items-center bg-[linear-gradient(#d2d2d2,#dedede)] shrink-0 border-b border-[#bdbdbd] pl-[6px]">
    <div className="w-[129px] h-[18px] rounded-[3px] border border-[#555] bg-white flex shrink-0 overflow-hidden">
      <div className="flex-1 pl-[3px] text-[11px] leading-[16px] font-['DejaVu_Sans'] text-[#111]">Solid Body</div>
      <div className="w-[15px] bg-[linear-gradient(#dcecff,#4f94e0)] border-l border-[#555] flex items-center justify-center">
        <svg width="11" height="7" viewBox="0 0 11 7"><polygon points="0,0 11,0 5.5,7" fill="#111" /></svg>
      </div>
    </div>
    <Sp w="w-[5px]" />
    <div className="flex items-center shrink-0 h-full">
      <div className="w-[22px] flex justify-center">{I.filter}</div>
      <Arr w="w-[7px]" />
      <div className="w-[23px] flex justify-center">{I.back}</div>
      <div className="w-[25px] flex justify-center">{I.cubeo}</div>
      <div className="w-[23px] flex justify-center">{I.sel}</div>
      <div className="w-[22px] flex justify-center">{I.selg}</div>
      <Sp w="w-[3px]" /><Sep h="h-[26px]" />
      <div className="w-[26px] flex justify-center">{I.rect}</div>
      <Arr w="w-[8px]" />
    </div>
    <div className="flex-1" />
    <Arr w="w-[10px]" c="self-end pb-[4px] mr-[3px]" />
  </div>
);

const Status = () => (
  <div className="h-[22px] flex items-center bg-[#e2e2e2] shrink-0 border-b border-[#a8a8a8] font-['DejaVu_Sans'] text-[10.5px] font-bold text-[#222] tracking-[0.15px] leading-none">
    <div className="w-[611px] pl-[3px] h-full flex items-center border-r border-[#bbb] shrink-0">Select bodies to measure mass properties</div>
    <div className="w-[611px] pl-[3px] h-full flex items-center border-r border-[#bbb] shrink-0">Solid Body selected</div>
    <div className="w-[20px] h-full border-r border-[#bbb] shrink-0" />
  </div>
);

const ViewSash = () => (
  <div className="h-[15px] flex items-center bg-[#d6d6d6] shrink-0 border-b border-[#8a8a8a] px-[2px]">
    <div className="w-[909px] h-[6px] border border-[#b8b8b8] bg-[#f2f2f2] rounded-[3px] shrink-0 mr-[2px]" />
    <div className="w-[19px] h-[15px] bg-[#e4e4e4] border border-[#888] flex items-center justify-center shrink-0">
      <svg width="9" height="12" viewBox="0 0 9 12"><path d="M7,1 L2,6 L7,11" stroke="#444" strokeWidth="2.6" fill="none" /></svg>
    </div>
    <div className="w-[70px] h-[15px] bg-[linear-gradient(#66738f,#3c4964_45%,#000_60%,#000)] shrink-0" />
    <div className="w-[18px] h-[15px] bg-[#e4e4e4] border border-[#888] flex items-center justify-center shrink-0">
      <svg width="9" height="12" viewBox="0 0 9 12"><path d="M2,1 L7,6 L2,11" stroke="#444" strokeWidth="2.6" fill="none" /></svg>
    </div>
    <div className="flex-1 h-[6px] border border-[#b8b8b8] bg-[#f2f2f2] rounded-[3px]" />
  </div>
);

const tabClass = 'w-[26px] h-[40px] ml-[6px] mb-[2px] bg-[#e2e2e2] border border-[#777] border-r-0 flex items-center justify-center shrink-0 overflow-hidden';
const Tabs = () => (
  <div className="w-[33px] bg-[#aaaaaa] shrink-0 flex flex-col pt-[15px] border-r border-[#808080]">
    <div className="w-[29px] h-[44px] ml-[4px] bg-[#ececec] border border-[#999] border-r-0 flex items-center justify-center shrink-0">{I.tTree}</div>
    <div className={tabClass}>{I.tCon}</div>
    <div className={tabClass}>{I.tPart}</div>
    <div className={tabClass}>{I.tReuse}</div>
    <Sp w="h-[11px]" />
    <div className={tabClass}>{I.tWeb}</div>
    <Sp w="h-[12px]" />
    <div className={tabClass}>{I.tClock}</div>
    <div className={tabClass}>{I.tList}</div>
    <div className={tabClass}>{I.tRole}</div>
    <div className={tabClass}>{I.tMotion}</div>
    <div className={tabClass}>{I.tUsers}</div>
    <div className={tabClass}>{I.tPic}</div>
    <div className={tabClass}>{I.tBall}</div>
  </div>
);

const HScroll = () => (
  <div className="h-[17px] flex bg-[repeating-conic-gradient(#d6d2c8_0_25%,#f4f4f4_0_50%)] bg-[length:2px_2px] shrink-0">
    <div className="w-[16px] bg-[#d6d2c8] border border-t-white border-l-white border-[#444] flex items-center justify-center shrink-0">
      <svg width="5" height="9" viewBox="0 0 5 9"><polygon points="5,0 5,9 0,4.5" fill="#111" /></svg>
    </div>
    <div className="w-[22px] bg-[#d6d2c8] border border-t-white border-l-white border-[#777] shrink-0" />
    <div className="flex-1" />
    <div className="w-[16px] bg-[#d6d2c8] border border-t-white border-l-white border-[#444] flex items-center justify-center shrink-0">
      <svg width="5" height="9" viewBox="0 0 5 9"><polygon points="0,0 0,9 5,4.5" fill="#111" /></svg>
    </div>
  </div>
);

const Zebra = ({ n, h = 'h-[18px]' }) => Array.from({ length: n }).map((_, i) => (
  <div key={i} className={`${h} shrink-0 border-b border-[#e6e6e6] ${i % 2 ? 'bg-white' : 'bg-[#f6f6f6]'}`} />
));

const PanelHead = ({ t, up }) => (
  <div className="h-[22px] flex bg-[linear-gradient(#f2f2f2,#f2f2f2_45%,#d4d8da_50%,#e6e6e6)] border-b border-[#999] shrink-0 overflow-hidden">
    <div className="w-[126px] pl-[6px] pt-[4px] flex items-center text-[10.5px] font-bold font-['DejaVu_Sans'] text-[#222] shrink-0 border-r border-[#aaa]">{t}</div>
    <div className="w-[11px] pl-[5px] flex items-center shrink-0">
      <svg width="8" height="10" viewBox="0 0 12 10" className="shrink-0"><path d={up ? 'M1,8 L6,2 L11,8' : 'M1,2 L6,8 L11,2'} stroke="#555" strokeWidth="3" fill="none" /></svg>
    </div>
  </div>
);

const ToolBtn = ({ children, h = 'h-[30px]', c = 'border-[#bbb]' }) => (
  <div className={`${h} rounded-l-[4px] border border-r-0 ${c} bg-[linear-gradient(#fafafa,#e4e4e4)] flex items-center justify-center overflow-hidden shrink-0`}>{children}</div>
);

const Panel = () => (
  <div className="w-[156px] bg-[#ececec] shrink-0 flex flex-col pl-[9px] pr-[9px]">
    <div className="h-[21px] mt-[7px] flex items-center shrink-0">
      <div className="w-[24px] pl-[4px] flex items-center justify-start shrink-0">
        <svg width="13" height="13" viewBox="0 0 13 13"><path d="M2,8 C2,3 6,1 10,2 C12,5 10,9 5,10Z" fill="#f0e060" stroke="#111" strokeWidth="1.3" /><path d="M4,9 L1,12" stroke="#111" strokeWidth="1.4" /></svg>
      </div>
      <div className="flex-1 h-[21px] bg-[linear-gradient(#f4f4f4,#f4f4f4_50%,#d8d8d8)] border-b border-r border-[#999] flex items-center pl-[4px] pt-[2px] text-[10.5px] font-bold font-['DejaVu_Sans'] text-[#222] whitespace-nowrap">Assembly Navi...</div>
    </div>
    <div className="h-[408px] mt-[4px] border border-[#777] flex flex-col shrink-0 overflow-hidden px-[1px] pb-[1px] bg-white">
      <div className="h-[18px] bg-[linear-gradient(#f4f4f4,#f4f4f4_50%,#dcdcdc)] border-b border-[#bbb] flex items-center pl-[6px] pt-[4px] text-[10.5px] font-['DejaVu_Sans'] text-[#222] shrink-0 whitespace-nowrap">Descriptive Part Name</div>
      <div className="flex-1 flex flex-col overflow-hidden">
        <div className="h-[18px] pt-[3px] shrink-0 border-b border-[#e6e6e6] bg-white flex items-center pl-[8px] font-['DejaVu_Sans'] text-[10.5px] text-[#2a3a70] whitespace-nowrap">
          <div className="w-[10px] border-t border-dotted border-[#666] shrink-0 mr-[3px]" />
          <svg width="14" height="13" viewBox="0 0 14 13" className="shrink-0"><rect x="1" y="3" width="9" height="9" fill="#fff" stroke="#111" /><path d="M2,7 L5,10 L13,1" stroke="#e01818" strokeWidth="1.8" fill="none" /></svg>
          <svg width="13" height="13" viewBox="0 0 13 13" className="shrink-0 ml-[2px] mr-[4px]"><polygon points="1,4 4,1 12,1 12,9 9,12 1,12" fill="#fff070" stroke="#333" /><path d="M1,4 H9 V12 M9,4 L12,1" stroke="#333" fill="none" /></svg>
          NG_Enero_2k1
        </div>
        <Zebra n={20} />
      </div>
      <HScroll />
    </div>
    <div className="h-[12px] flex items-center gap-[7px] shrink-0">
      <div className="w-[50px] h-px bg-[#bbb] ml-[1px]" /><div className="w-[22px] h-[5px] bg-[#ddd] border border-[#aaa]" /><div className="flex-1 h-px bg-[#bbb]" />
    </div>
    <PanelHead t="Preview" />
    <PanelHead t="Dependencies" up />
    <div className="flex flex-1 min-h-0 pl-[7px] pt-[4px] bg-[#e8e8e8]">
      <div className="w-[102px] h-[282px] border border-[#777] bg-white overflow-hidden flex flex-col shrink-0">
        <Zebra n={16} />
      </div>
      <div className="flex-1 ml-[3px] flex flex-col gap-[4px] pt-[1px]">
        <ToolBtn c="border-[#666]">
          <svg width="22" height="22" viewBox="0 0 22 22"><circle cx="9" cy="9" r="6.5" fill="#fff" stroke="#111" strokeWidth="1.3" /><path d="M14,14 L20,20" stroke="#1a2a90" strokeWidth="3" /></svg>
        </ToolBtn>
        <ToolBtn><svg width="18" height="18" viewBox="0 0 18 18"><polygon points="1,6 8,6 8,1 17,9 8,17 8,12 1,12" fill="#7a9aa0" /></svg></ToolBtn>
        <ToolBtn><svg width="18" height="18" viewBox="0 0 18 18"><polygon points="17,6 10,6 10,1 1,9 10,17 10,12 17,12" fill="#7a9aa0" /></svg></ToolBtn>
        <ToolBtn><svg width="22" height="22" viewBox="0 0 22 22"><g fill="#aaa" stroke="#888"><rect x="2" y="2" width="5" height="5" /><rect x="2" y="8" width="5" height="5" /><rect x="2" y="14" width="5" height="5" /></g><path d="M9,4 H16 M9,11 H16 M9,17 H16" stroke="#907090" strokeDasharray="2 1" /></svg></ToolBtn>
      </div>
    </div>
    <div className="h-[17px] mb-[6px] mt-[5px] shrink-0"><HScroll /></div>
  </div>
);

const L = '#ff6a00';
const lines = [
  'M441,503 C480,470 540,450 604,447 C680,444 780,465 853,490 C880,499 900,510 912,517',
  'M446,505 C490,476 545,456 606,453 C680,450 770,470 850,496 C875,505 895,515 912,525',
  'M498,527 C500,512 560,488 612,482 C680,476 750,495 800,512 C810,520 800,535 785,538',
  'M498,537 C530,520 570,490 640,488 C700,488 790,510 860,515',
  'M498,545 C540,525 620,515 686,523 C730,530 790,550 850,548',
  'M500,552 C530,538 620,530 690,535 C730,540 770,548 800,552',
  'M631,427 C630,395 670,375 727,372 C790,370 880,410 897,460 C905,500 880,530 820,530 C740,530 650,490 631,427 Z',
  'M625,425 C625,390 670,368 727,366 C795,366 885,405 902,460',
  'M600,430 L571,552', 'M592,457 L559,552', 'M612,490 L596,552', 'M580,470 L555,552', 'M607,442 L586,552',
  'M802,400 C790,420 775,460 759,503 L749,552',
  'M780,422 C783,408 795,395 808,383',
  'M780,422 C788,424 797,424 802,420',
  'M802,423 L814,473', 'M839,443 L824,507', 'M808,383 C830,400 845,440 849,507',
  'M842,400 C850,430 855,480 853,510',
  'M768,462 L752,530', 'M795,468 L775,545', 'M782,466 L766,530',
  'M800,478 C815,470 835,475 853,492',
  'M606,437 C612,470 640,490 680,520',
  'M441,503 C470,495 495,510 505,528 C510,540 500,550 495,552',
  'M441,503 C445,520 460,540 465,552',
  'M445,552 C450,530 470,510 500,512',
  'M605,430 C590,420 560,450 520,470 C490,485 465,495 448,510',
  'M595,440 C570,450 530,470 490,500',
  'M565,470 C540,480 510,495 490,510',
  'M610,552 C612,535 650,520 672,530 C682,538 680,545 676,552',
  'M530,552 C532,530 580,525 600,540 L612,552',
  'M640,552 C645,540 680,535 690,552',
  'M830,552 C840,535 880,535 910,552',
  'M912,517 L900,552 M912,517 C905,530 880,545 860,552',
  'M770,520 C790,512 800,520 798,535 C795,545 775,545 760,540',
  'M943,548 C990,580 1012,640 1005,690 C1003,715 1005,735 1012,750',
  'M943,556 C975,585 1000,650 995,695',
  'M943,600 C965,640 985,700 1005,740',
  'M943,620 C955,650 975,700 1000,745',
  'M943,660 C955,690 980,730 1010,748',
  'M943,730 C965,738 990,745 1012,748',
  'M943,745 C975,750 1000,745 1012,752',
  'M943,700 A16,16 0 1 1 973,712 C968,725 955,735 943,735',
  'M943,718 H972', 'M950,730 L955,745', 'M968,735 V745',
  'M943,800 L1013,750 L1010,787 C1005,800 995,815 987,827 C975,840 960,852 943,862',
  'M1012,750 L1028,712',
];
const SIL = 'M400,620 L408,552 C415,530 430,512 441,503 C455,490 470,482 473,480 L518,458 L620,397 C640,382 680,365 727,363 C765,362 790,372 808,378 C835,388 855,398 869,410 C890,430 905,450 910,463 C916,475 917,482 917,487 C917,500 914,508 912,513 L943,540 C975,560 1005,595 1020,627 C1028,650 1033,670 1032,687 C1031,705 1025,725 1013,753 L1010,787 C1005,800 995,815 987,827 C975,840 960,852 943,862 L900,900 L400,800Z';

const Viewport = () => (
  <div className="flex-1 relative bg-black overflow-hidden">
    <svg className="absolute top-0 left-0" width="1088" height="809" viewBox="192 180 1088 809">
      <defs>
        <linearGradient id="rb" x1="0" y1="0" x2="0" y2="1"><stop offset="0" stopColor="#e02020" /><stop offset=".33" stopColor="#f0e020" /><stop offset=".66" stopColor="#20c040" /><stop offset="1" stopColor="#2040e0" /></linearGradient>
        <linearGradient id="neck" x1="0" y1="0" x2="1" y2="1"><stop offset="0" stopColor="#7a3800" /><stop offset="1" stopColor="#b85000" /></linearGradient>
        <linearGradient id="hole" x1="0" y1="0" x2="1" y2="0"><stop offset="0" stopColor="#8a4200" /><stop offset=".5" stopColor="#7c3a00" /><stop offset="1" stopColor="#8c4400" /></linearGradient>
        <filter id="bl" x="-50%" y="-50%" width="200%" height="200%"><feGaussianBlur stdDeviation="3" /></filter>
        <filter id="bl2" x="-50%" y="-50%" width="200%" height="200%"><feGaussianBlur stdDeviation="5" /></filter>
        <clipPath id="sil"><path d={SIL} /></clipPath>
      </defs>
      <path d={SIL} fill="#ff8a00" />
      <g clipPath="url(#sil)">
        <path d="M502,552 L502,523 L522,497 L575,463 L608,450 L620,473 L661,500 L718,523 L755,537 L767,552 Z" fill="url(#neck)" />
        <path d="M606,445 C622,490 700,528 790,545" stroke="#a84c00" strokeWidth="10" fill="none" filter="url(#bl)" />
        <path d="M620,397 C600,420 600,440 606,450" stroke="#b85800" strokeWidth="8" fill="none" filter="url(#bl)" />
        <path d="M918,470 C920,490 914,510 900,528" stroke="#c86000" strokeWidth="6" fill="none" filter="url(#bl)" />
        <ellipse cx="805" cy="538" rx="24" ry="5" fill="#ffe040" filter="url(#bl)" />
        <ellipse cx="650" cy="496" rx="14" ry="4" fill="#ffb020" filter="url(#bl)" transform="rotate(25 650 496)" />
        <path d="M441,552 C445,520 470,505 490,515 L495,552Z" fill="#d86400" filter="url(#bl)" />
        <ellipse cx="465" cy="530" rx="4" ry="8" fill="#ffe040" filter="url(#bl)" />
        <path d="M680,552 C690,530 700,525 705,525 C712,535 720,545 722,552Z" fill="#ffa020" />
        <path d="M943,575 C965,605 985,655 986,695 L974,700 C968,660 955,620 943,600Z" fill="#8a4000" filter="url(#bl2)" />
        <ellipse cx="978" cy="738" rx="9" ry="6" fill="#ffe880" filter="url(#bl)" />
        <path d="M943,800 L1012,750 L1010,787 L987,827 L943,862Z" fill="#a94800" />
        <path d="M1012,750 L1030,705 L1034,760Z" fill="#a94800" />
      </g>
      <path d="M661,427 C665,400 700,385 739,385 C790,385 867,420 867,463 C867,490 835,507 808,507 C760,507 710,490 685,465 C670,450 661,440 661,427 Z" fill="url(#hole)" stroke={L} strokeWidth="2" />
      <g stroke={L} strokeWidth="2.4" fill="none" clipPath="url(#sil)">
        {lines.map((d, i) => <path key={i} d={d} />)}
      </g>
      <path d="M276,905 L285,870" stroke="#14e014" strokeWidth="2.4" />
      <path d="M276,905 L313,921" stroke="#f01010" strokeWidth="2.4" />
      <path d="M276,905 L258,923" stroke="#1414f0" strokeWidth="2" />
      <circle cx="276" cy="905" r="5" fill="#9a9a9a" />
      <text x="283" y="866" fill="#14d014" fontSize="11" fontFamily="Liberation Sans">Y</text>
      <text x="322" y="930" fill="#e01010" fontSize="11" fontFamily="Liberation Sans">X</text>
      <text x="250" y="933" fill="#1414e0" fontSize="11" fontFamily="Liberation Sans">Z</text>
    </svg>

    <div className="absolute left-[405px] top-[79px] w-[253px] h-[49px] border-[5px] border-[#ff0000] p-[4px]">
      <div className="w-full h-full border-[5px] border-[#ff0000] bg-[#e8e8e8] flex items-center pl-[3px] font-['Liberation_Sans'] text-[11px] text-[#111] overflow-hidden whitespace-nowrap">
        <div className="w-[113px] h-[17px] rounded-[3px] border border-[#777] bg-white flex shrink-0 overflow-hidden">
          <div className="flex-1 pl-[3px] leading-[16px] pt-[1px]">Volume</div>
          <div className="w-[16px] bg-[linear-gradient(#dcecff,#4f94e0)] border-l border-[#555] flex items-center justify-center">
            <svg width="11" height="7" viewBox="0 0 11 7"><polygon points="0,0 11,0 5.5,7" fill="#111" /></svg>
          </div>
        </div>
        <span className="ml-[3px] tracking-[0.05px]">=260483.3451 mm^3</span>
      </div>
    </div>

    <Dialog />
  </div>
);

const Sec = ({ t, up, h = 'h-[21px]' }) => (
  <div className={`${h} flex bg-[linear-gradient(#f6f8f8,#f6f8f8_45%,#dadddf_55%,#eceeee)] border-b border-[#8a8a8a] shrink-0`}>
    <div className="flex-1 pl-[6px] pt-[4px] flex items-center text-[10.5px] font-bold font-['DejaVu_Sans'] text-[#222] tracking-[0.15px]">{t}</div>
    <div className="w-[22px] border-l border-[#aaa] flex items-center justify-center">
      <svg width="14" height="10" viewBox="0 0 14 10"><path d={up ? 'M1.5,8.5 L7,2 L12.5,8.5' : 'M1.5,1.5 L7,8 L12.5,1.5'} stroke="#606060" strokeWidth="3" fill="none" /></svg>
    </div>
  </div>
);

const DBtn = ({ children, green }) => (
  <div className={`w-[60px] h-[19px] rounded-[3px] border flex items-center justify-center font-['Liberation_Sans'] text-[11px] text-[#111] ${green ? 'border-[#2a7a2a] bg-[linear-gradient(#dff5d0,#8fdc70_55%,#a8e890)]' : 'border-[#666] bg-[linear-gradient(#fafafa,#c8c8c8_55%,#ececec)]'}`}>{children}</div>
);

const Dialog = () => (
  <div className="absolute left-[169px] top-[372px] w-[583px] h-[356px] bg-[#ececec] border-x border-[#7a8494] flex flex-col">
    <div className="h-[20px] flex items-stretch bg-[linear-gradient(#5e6b87,#3c4760_40%,#000_75%,#10151f)] shrink-0 text-white">
      <div className="w-[20px] flex items-center justify-center border-r border-[#8a93a5]">
        <svg width="12" height="12" viewBox="0 0 12 12"><path d="M2,1 L8,3 L6,5 L11,11 L4,6 L3,8Z" fill="#fff" /></svg>
      </div>
      <div className="flex-1 pl-[5px] pt-[2px] flex items-center font-['DejaVu_Sans'] font-bold text-[11.5px]">Measure Bodies</div>
      <div className="w-[21px] flex items-center justify-center border-l border-[#8a93a5]">
        <svg width="12" height="12" viewBox="0 0 12 12"><path d="M8,2 C11,6 8,10 2,9" stroke="#fff" strokeWidth="2.2" fill="none" /><polygon points="1,6 1,11 5,9" fill="#fff" /></svg>
      </div>
      <div className="w-[21px] flex items-center justify-center border-l border-[#8a93a5]">
        <div className="w-[10px] h-[3px] bg-white -mt-[6px]" />
      </div>
      <div className="w-[19px] flex items-center justify-center border-l border-[#8a93a5]">
        <svg width="12" height="12" viewBox="0 0 12 12"><path d="M1.5,1.5 L10.5,10.5 M10.5,1.5 L1.5,10.5" stroke="#fff" strokeWidth="2.6" /></svg>
      </div>
    </div>
    <div className="flex-1 flex flex-col px-[5px] pt-[5px] bg-[linear-gradient(#ececec,#e4e4e4)]">
      <div className="border-x border-[#c8c8c8] flex flex-col shrink-0">
        <Sec t="Objects" up />
        <div className="h-[48px] bg-[#d0d0d0] px-[8px] pt-[7px] shrink-0">
          <div className="h-[31px] rounded-[5px] bg-[linear-gradient(90deg,#dca672,#dcb48a_50%,#d2cec6_85%,#d0d0d0)] flex items-center pl-[2px] font-['Liberation_Sans'] text-[11px] text-[#111] relative">
            <svg width="14" height="14" viewBox="0 0 14 14" className="shrink-0"><path d="M1,8 L4,6 L6,9 L12,1 L13,3 L6,13Z" fill="#18b030" /></svg>
            <span className="ml-[3px]">Select bodies (1)</span>
            <div className="flex-1" />
            <div className="w-[30px] h-[31px] rounded-[4px] border border-[#777] bg-[linear-gradient(#ffb050,#ff6a10)] flex items-center justify-center">
              <svg width="22" height="24" viewBox="0 0 22 24"><polygon points="11,2 20,7 11,12 2,7" fill="#ffe070" stroke="#e03000" /><polygon points="2,7 11,12 11,22 2,17" fill="#ffc030" stroke="#e03000" /><polygon points="11,12 20,7 20,17 11,22" fill="#ffa010" stroke="#e03000" /></svg>
            </div>
          </div>
        </div>
        <Sec t="Associative Measure and Checking" up />
        <div className="h-[56px] bg-[#d0d0d0] shrink-0 flex flex-col pl-[7px] pr-[9px] font-['Liberation_Sans'] text-[11px]">
          <div className="h-[27px] pt-[8px] pl-[1px] flex items-start text-[#111]">
            <div className="w-[16px] h-[16px] rounded-[3px] border border-[#555] bg-[linear-gradient(#f0f0f0,#c8c8c8_60%,#e4e4e4)] shrink-0" />
            <span className="ml-[1px] leading-[16px]">Associative</span>
          </div>
          <div className="flex items-center justify-between text-[#9a9a9a]">
            <span>Requirement</span>
            <div className="w-[129px] h-[20px] rounded-[3px] border border-[#aaa] flex items-center bg-[#d6d6d6]">
              <span className="flex-1 pl-[3px]">None</span>
              <div className="w-[15px] h-full border-l border-[#bbb] bg-[linear-gradient(#f4f4f4,#d8d8d8)] flex items-center justify-center">
                <svg width="11" height="7" viewBox="0 0 11 7"><polygon points="0,0 11,0 5.5,7" fill="#9a9a9a" /></svg>
              </div>
            </div>
          </div>
        </div>
        <Sec t="Results Display" h="h-[22px]" />
        <Sec t="Settings" h="h-[22px]" />
      </div>
      <div className="flex-1" />
      <div className="h-px bg-[#bcbcbc] shrink-0" />
      <div className="h-[35px] flex items-start justify-end gap-[7px] pt-[5px] pr-[11px] shrink-0">
        <DBtn>OK</DBtn>
        <DBtn green>Apply</DBtn>
        <DBtn>Cancel</DBtn>
      </div>
    </div>
    <div className="h-[8px] shrink-0 bg-[linear-gradient(#1a2233,#4a5670)] border-b-2 border-[#5a5a5a]" />
  </div>
);

const Bottom = () => (
  <div className="h-[35px] flex items-center bg-[linear-gradient(#d6d6d6,#e0e0e0)] shrink-0 border-t border-[#bcbcbc] pl-[4px]">
    <Grip />
    <S i="b1" /><S i="b2" /><S i="b3" /><S i="b4" /><S i="b5" /><S i="b6" />
    <Sep /><Sp w="w-[3px]" />
    <S i="b7" /><S i="b8" /><S i="b9" /><S i="b10" /><S i="b11" /><S i="b12" /><S i="b13" /><S i="b14" /><S i="b15" /><S i="b16" /><S i="b17" />
    <Sp w="w-[3px]" /><Sep /><Sp w="w-[3px]" />
    <S i="b18" /><S i="b19" w="w-[30px]" />
    <Sep /><Sp w="w-[4px]" />
    <S i="b20" /><S i="b21" /><S i="b22" /><S i="b23" /><S i="b24" />
    <Sep /><Sp w="w-[3px]" />
    <S i="b25" /><ArrLow />
  </div>
);

export default function App() {
  return (
    <div className="w-[1280px] h-[1024px] flex flex-col overflow-hidden bg-[#d8d8d8]">
      <div className="h-[18px] flex items-center bg-[linear-gradient(90deg,#8e8e8e,#bcbcbc)] shrink-0 border-b border-[#a0a0a0]">
        <svg width="16" height="16" viewBox="0 0 16 16" className="ml-[2px] shrink-0"><circle cx="8" cy="9" r="6" fill="#3d86e0" /><path d="M2,2 L8,6 L14,1 L12,8 L5,8Z" fill="#e02020" /><path d="M3,7 C7,9 11,8 14,5 C12,12 8,15 4,14 C6,12 5,9 3,7Z" fill="#ffd24a" /></svg>
        <span className="ml-[1px] font-['DejaVu_Sans'] text-[11px] text-[#f0f0f0] leading-none whitespace-nowrap tracking-[0.1px]">NX 5 - Modeling - [NG_Enero_2k11.prt (Modified) ]</span>
        <div className="flex-1" />
        <div className="flex gap-[2px] pr-[3px]">
          <WinBtn><div className="w-[6px] h-[2px] bg-black mt-[5px]" /></WinBtn>
          <WinBtn><svg width="9" height="9" viewBox="0 0 9 9"><rect x="3" y="0.5" width="5.5" height="5" fill="none" stroke="#000" /><rect x="0.5" y="3" width="5.5" height="5" fill="#d6d6d6" stroke="#000" /></svg></WinBtn>
          <WinBtn><svg width="9" height="9" viewBox="0 0 9 9"><path d="M1,1 L8,8 M8,1 L1,8" stroke="#000" strokeWidth="1.6" /></svg></WinBtn>
        </div>
      </div>
      <Menu />
      <Row1 />
      <Row2 />
      <Row3 />
      <Status />
      <ViewSash />
      <div className="flex-1 min-h-0 flex">
        <Tabs />
        <Panel />
        <div className="w-[3px] bg-[#6a6a6a] shrink-0" />
        <Viewport />
      </div>
      <Bottom />
    </div>
  );
}
